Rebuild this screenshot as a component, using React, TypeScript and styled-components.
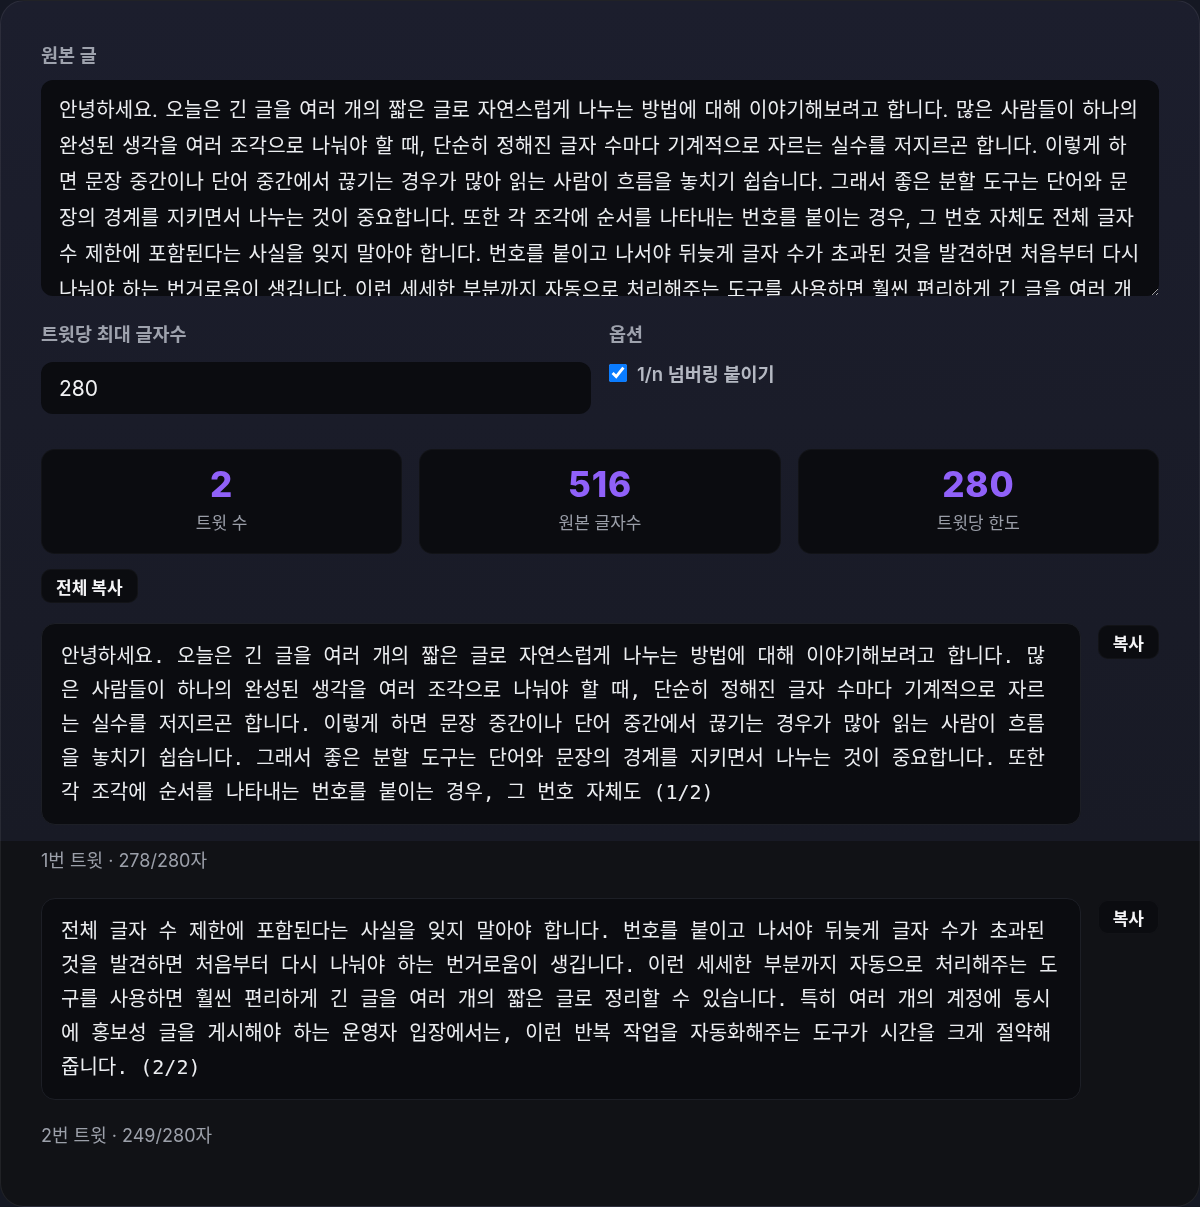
import React, { useState } from 'react';
import styled, { createGlobalStyle } from 'styled-components';

const GlobalStyle = createGlobalStyle`
  html, body {
    margin: 0;
    padding: 0;
    background: #151823;
  }
  body {
    font-family: Inter, "Noto Sans CJK KR", sans-serif;
  }
  * {
    box-sizing: border-box;
  }
`;

const Card = styled.div`
  min-height: 1207px;
  padding: 42px 40px 40px;
  border: 1px solid rgba(255, 255, 255, 0.07);
  border-radius: 24px;
  background: linear-gradient(180deg, #1c1e2d 0px, #181a25 840px, #111216 840px, #111216 100%);
  color: #e6e7ea;
`;

const Label = styled.div<{ $gap?: number }>`
  font-size: 18.5px;
  font-weight: 600;
  line-height: 24px;
  color: #9ea2ad;
  margin-bottom: ${(p) => p.$gap ?? 13}px;
`;

const Source = styled.textarea`
  display: block;
  width: 100%;
  height: 216px;
  padding: 12px 18px;
  border: none;
  outline: none;
  border-radius: 12px;
  background: #0b0c10;
  color: #eceef1;
  font-family: Inter, "Noto Sans CJK KR", sans-serif;
  font-size: 20px;
  letter-spacing: 0.22px;
  word-spacing: 1.5px;
  line-height: 36px;
  resize: vertical;
  scrollbar-width: none;
  &::-webkit-scrollbar {
    display: none;
  }
`;

const SettingsGrid = styled.div`
  display: grid;
  grid-template-columns: 1fr 1fr;
  column-gap: 18px;
  margin-top: 26px;
`;

const NumberInput = styled.input`
  display: block;
  width: 100%;
  height: 52px;
  padding: 0 18px;
  border: none;
  outline: none;
  border-radius: 12px;
  background: #0b0c10;
  color: #f1f2f4;
  font-family: Inter, sans-serif;
  font-size: 21px;
`;

const CheckRow = styled.label`
  display: flex;
  align-items: center;
  gap: 10px;
  height: 22px;
  font-size: 18.5px;
  font-weight: 600;
  color: #b4b8c2;
  cursor: pointer;
`;

const Check = styled.input`
  width: 18px;
  height: 18px;
  margin: 0;
  accent-color: #0a7cff;
`;

const Stats = styled.div`
  display: grid;
  grid-template-columns: repeat(3, 1fr);
  gap: 17px;
  margin-top: 35px;
`;

const Stat = styled.div`
  height: 105px;
  padding-bottom: 6px;
  border-radius: 14px;
  background: #0b0c10;
  border: 1px solid rgba(255, 255, 255, 0.03);
  display: flex;
  flex-direction: column;
  align-items: center;
  justify-content: center;
  gap: 8px;
`;

const StatValue = styled.div`
  font-family: Inter, sans-serif;
  font-size: 35px;
  font-weight: 800;
  line-height: 40px;
  color: #9061f9;
  letter-spacing: 0.8px;
`;

const StatName = styled.div`
  font-size: 17px;
  line-height: 22px;
  color: #9a9ea8;
`;

const Button = styled.button`
  display: block;
  height: 34px;
  padding: 0 14px;
  border: 1px solid rgba(255, 255, 255, 0.03);
  border-radius: 10px;
  background: #0b0c10;
  color: #f4f4f6;
  font-family: Inter, "Noto Sans CJK KR", sans-serif;
  font-size: 17px;
  font-weight: 700;
  cursor: pointer;
  flex-shrink: 0;
`;

const CopyAll = styled(Button)`
  margin-top: 15px;
`;

const TweetList = styled.div`
  display: flex;
  flex-direction: column;
  gap: 27px;
  margin-top: 20px;
`;

const TweetRow = styled.div`
  display: flex;
  align-items: flex-start;
  gap: 17px;
`;

const TweetBody = styled.div`
  flex: 1;
  padding: 15px 22px 15px 19px;
  border: 1px solid #1d1f26;
  border-radius: 14px;
  background: #0b0c10;
  color: #eceef1;
  font-family: "DejaVu Sans Mono", "Noto Sans CJK KR", monospace;
  font-size: 20px;
  line-height: 34px;
  word-break: break-all;
  white-space: pre-wrap;
`;

const SmallCopy = styled(Button)`
  margin-top: 2px;
`;

const Meta = styled.div`
  margin-top: 26px;
  font-size: 18px;
  line-height: 20px;
  color: #9ca0aa;
`;

const SOURCE =
  '안녕하세요. 오늘은 긴 글을 여러 개의 짧은 글로 자연스럽게 나누는 방법에 대해 이야기해보려고 합니다. 많은 사람들이 하나의 완성된 생각을 여러 조각으로 나눠야 할 때, 단순히 정해진 글자 수마다 기계적으로 자르는 실수를 저지르곤 합니다. 이렇게 하면 문장 중간이나 단어 중간에서 끊기는 경우가 많아 읽는 사람이 흐름을 놓치기 쉽습니다. 그래서 좋은 분할 도구는 단어와 문장의 경계를 지키면서 나누는 것이 중요합니다. 또한 각 조각에 순서를 나타내는 번호를 붙이는 경우, 그 번호 자체도 전체 글자 수 제한에 포함된다는 사실을 잊지 말아야 합니다. 번호를 붙이고 나서야 뒤늦게 글자 수가 초과된 것을 발견하면 처음부터 다시 나눠야 하는 번거로움이 생깁니다. 이런 세세한 부분까지 자동으로 처리해주는 도구를 사용하면 훨씬 편리하게 긴 글을 여러 개의 짧은 글로 정리할 수 있습니다. 특히 여러 개의 계정에 동시에 홍보성 글을 게시해야 하는 운영자 입장에서는, 이런 반복 작업을 자동화해주는 도구가 시간을 크게 절약해 줍니다.';

const TWEETS = [
  '안녕하세요. 오늘은 긴 글을 여러 개의 짧은 글로 자연스럽게 나누는 방법에 대해 이야기해보려고 합니다. 많은 사람들이 하나의 완성된 생각을 여러 조각으로 나눠야 할 때, 단순히 정해진 글자 수마다 기계적으로 자르는 실수를 저지르곤 합니다. 이렇게 하면 문장 중간이나 단어 중간에서 끊기는 경우가 많아 읽는 사람이 흐름을 놓치기 쉽습니다. 그래서 좋은 분할 도구는 단어와 문장의 경계를 지키면서 나누는 것이 중요합니다. 또한 각 조각에 순서를 나타내는 번호를 붙이는 경우, 그 번호 자체도 (1/2)',
  '전체 글자 수 제한에 포함된다는 사실을 잊지 말아야 합니다. 번호를 붙이고 나서야 뒤늦게 글자 수가 초과된 것을 발견하면 처음부터 다시 나눠야 하는 번거로움이 생깁니다. 이런 세세한 부분까지 자동으로 처리해주는 도구를 사용하면 훨씬 편리하게 긴 글을 여러 개의 짧은 글로 정리할 수 있습니다. 특히 여러 개의 계정에 동시에 홍보성 글을 게시해야 하는 운영자 입장에서는, 이런 반복 작업을 자동화해주는 도구가 시간을 크게 절약해 줍니다. (2/2)',
];

const COUNTS = [278, 249];

function App() {
  const [text, setText] = useState<string>(SOURCE);
  const [limit, setLimit] = useState<string>('280');
  const [numbering, setNumbering] = useState<boolean>(true);

  return (
    <>
      <GlobalStyle />
      <Card>
        <Label>원본 글</Label>
        <Source value={text} onChange={(ev) => setText(ev.target.value)} />

        <SettingsGrid>
          <div>
            <Label $gap={16}>트윗당 최대 글자수</Label>
            <NumberInput value={limit} onChange={(ev) => setLimit(ev.target.value)} />
          </div>
          <div>
            <Label $gap={16}>옵션</Label>
            <CheckRow>
              <Check
                type="checkbox"
                checked={numbering}
                onChange={(ev) => setNumbering(ev.target.checked)}
              />
              1/n 넘버링 붙이기
            </CheckRow>
          </div>
        </SettingsGrid>

        <Stats>
          <Stat>
            <StatValue>2</StatValue>
            <StatName>트윗 수</StatName>
          </Stat>
          <Stat>
            <StatValue>516</StatValue>
            <StatName>원본 글자수</StatName>
          </Stat>
          <Stat>
            <StatValue>280</StatValue>
            <StatName>트윗당 한도</StatName>
          </Stat>
        </Stats>

        <CopyAll>전체 복사</CopyAll>

        <TweetList>
          {TWEETS.map((tweet, i) => (
            <div key={i}>
              <TweetRow>
                <TweetBody>{tweet}</TweetBody>
                <SmallCopy>복사</SmallCopy>
              </TweetRow>
              <Meta>
                {i + 1}번 트윗 · {COUNTS[i]}/280자
              </Meta>
            </div>
          ))}
        </TweetList>
      </Card>
    </>
  );
}

export default App;
